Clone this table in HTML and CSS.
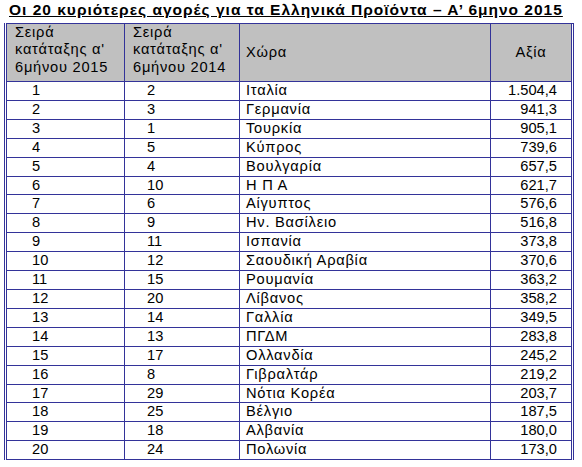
FILE: index.html
```html
<!DOCTYPE html>
<html lang="el">
<head>
    <meta charset="UTF-8">
    <meta name="viewport" content="width=device-width, initial-scale=1.0">
    <title>Αγορές 2015</title>
    <link rel="stylesheet" href="styles.css">
</head>
<body>
    <h1 class="title">Οι 20 κυριότερες αγορές για τα Ελληνικά Προϊόντα – Α’ 6μηνο 2015</h1>
    <table class="markets">
        <colgroup>
            <col class="c-rank15">
            <col class="c-rank14">
            <col class="c-country">
            <col class="c-value">
        </colgroup>
        <thead>
            <tr>
                <th class="hd">Σειρά<br>κατάταξης α'<br>6μήνου 2015</th>
                <th class="hd">Σειρά<br>κατάταξης α'<br>6μήνου 2014</th>
                <th class="hd hd-country">Χώρα</th>
                <th class="hd hd-value">Αξία</th>
            </tr>
        </thead>
        <tbody>
            <tr><td class="r15">1</td><td class="r14">2</td><td class="cty">Ιταλία</td><td class="val">1.504,4</td></tr>
            <tr><td class="r15">2</td><td class="r14">3</td><td class="cty">Γερμανία</td><td class="val">941,3</td></tr>
            <tr><td class="r15">3</td><td class="r14">1</td><td class="cty">Τουρκία</td><td class="val">905,1</td></tr>
            <tr><td class="r15">4</td><td class="r14">5</td><td class="cty">Κύπρος</td><td class="val">739,6</td></tr>
            <tr><td class="r15">5</td><td class="r14">4</td><td class="cty">Βουλγαρία</td><td class="val">657,5</td></tr>
            <tr><td class="r15">6</td><td class="r14">10</td><td class="cty">Η Π Α</td><td class="val">621,7</td></tr>
            <tr><td class="r15">7</td><td class="r14">6</td><td class="cty">Αίγυπτος</td><td class="val">576,6</td></tr>
            <tr><td class="r15">8</td><td class="r14">9</td><td class="cty">Ην. Βασίλειο</td><td class="val">516,8</td></tr>
            <tr><td class="r15">9</td><td class="r14">11</td><td class="cty">Ισπανία</td><td class="val">373,8</td></tr>
            <tr><td class="r15">10</td><td class="r14">12</td><td class="cty">Σαουδική Αραβία</td><td class="val">370,6</td></tr>
            <tr><td class="r15">11</td><td class="r14">15</td><td class="cty">Ρουμανία</td><td class="val">363,2</td></tr>
            <tr><td class="r15">12</td><td class="r14">20</td><td class="cty">Λίβανος</td><td class="val">358,2</td></tr>
            <tr><td class="r15">13</td><td class="r14">14</td><td class="cty">Γαλλία</td><td class="val">349,5</td></tr>
            <tr><td class="r15">14</td><td class="r14">13</td><td class="cty">ΠΓΔΜ</td><td class="val">283,8</td></tr>
            <tr><td class="r15">15</td><td class="r14">17</td><td class="cty">Ολλανδία</td><td class="val">245,2</td></tr>
            <tr><td class="r15">16</td><td class="r14">8</td><td class="cty">Γιβραλτάρ</td><td class="val">219,2</td></tr>
            <tr><td class="r15">17</td><td class="r14">29</td><td class="cty">Νότια Κορέα</td><td class="val">203,7</td></tr>
            <tr><td class="r15">18</td><td class="r14">25</td><td class="cty">Βέλγιο</td><td class="val">187,5</td></tr>
            <tr><td class="r15">19</td><td class="r14">18</td><td class="cty">Αλβανία</td><td class="val">180,0</td></tr>
            <tr><td class="r15">20</td><td class="r14">24</td><td class="cty">Πολωνία</td><td class="val">173,0</td></tr>
        </tbody>
    </table>
</body>
</html>
```

FILE: styles.css
```css
body {
    margin: 0;
    background: white;
    color: black;
    font-family: "Liberation Sans", Arial, sans-serif;
}
.title {
    margin: 0 0 4px 9px;
    padding-top: 1px;
    font-size: 15.5px;
    line-height: 18px;
    font-weight: bold;
    letter-spacing: 1px;
    text-decoration: underline;
}
.markets {
    margin-left: 4px;
    width: 570px;
    table-layout: fixed;
    border-collapse: separate;
    border-spacing: 0;
    border-top: 1px solid #333399;
    border-bottom: 0;
    border-left: 3px double #333399;
    border-right: 3px double #333399;
    font-size: 11pt;
}
.c-rank15 { width: 118px; }
.c-rank14 { width: 115px; }
.c-country { width: 251px; }
.c-value { width: 80px; }

th, td {
    padding: 0;
    border-right: 1px solid #333399;
    border-bottom: 1px solid #333399;
    font-weight: normal;
    text-align: left;
    vertical-align: middle;
}
th:last-child, td:last-child {
    border-right: 0;
}
.hd {
    background-color: #c0c0c0;
    height: 58px;
    box-sizing: border-box;
    padding-left: 8px;
    line-height: 17.3px;
    letter-spacing: 0.75px;
    vertical-align: top;
}
.hd-country {
    vertical-align: middle;
    padding-left: 6px;
}
.hd-value {
    vertical-align: middle;
    text-align: center;
    padding-left: 0;
}
tbody tr {
    height: 18.9px;
}
td {
    line-height: 17.9px;
}
.r15 { padding-left: 25px; }
.r14 { padding-left: 22px; }
.cty {
    padding-left: 6px;
    letter-spacing: 0.75px;
}
.val {
    text-align: right;
    padding-right: 14px;
}
```
